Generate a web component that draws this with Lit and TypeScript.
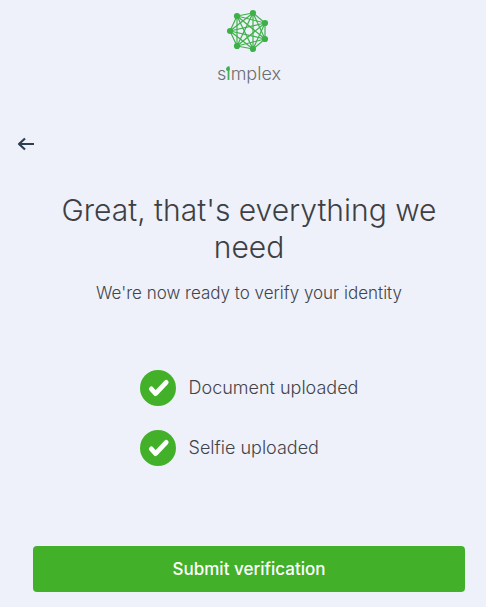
import { LitElement, html, svg, css } from "lit";
import { customElement, property } from "lit/decorators.js";

const NODES: [number, number][] = [
  [10, 8], [26, 5], [38, 15], [38, 31], [26, 41], [10, 38], [3, 23],
];

@customElement("brand-logo")
class BrandLogo extends LitElement {
  static styles = css`
    :host { display: flex; flex-direction: column; align-items: center; }
    .mark { display: block; width: 44px; height: 46px; }
    .name {
      margin-top: 8px;
      font: 300 18px/24px Inter, "Open Sans", sans-serif;
      color: #6c6d71;
    }
    .accent { position: relative; color: #3eb049; font-weight: 400; }
    .accent::before {
      content: "";
      position: absolute;
      left: 0;
      top: 4px;
      width: 4px;
      height: 4px;
      border-radius: 50%;
      background: #3eb049;
    }
  `;

  render() {
    const lines = NODES.flatMap((a, i) =>
      NODES.slice(i + 1).map(
        (b) => svg`<line x1=${a[0]} y1=${a[1]} x2=${b[0]} y2=${b[1]}></line>`
      )
    );
    return html`
      <svg class="mark" viewBox="0 0 44 46" aria-hidden="true">
        <g stroke="#3eb049" stroke-width="1.2">${lines}</g>
        <g fill="#3eb049">
          ${NODES.map((n) => svg`<circle cx=${n[0]} cy=${n[1]} r="3.1"></circle>`)}
        </g>
      </svg>
      <div class="name">s<span class="accent">i</span>mplex</div>
    `;
  }
}

@customElement("status-item")
class StatusItem extends LitElement {
  @property() label = "";

  static styles = css`
    :host { display: flex; align-items: center; gap: 13px; }
    .badge { flex: none; width: 36px; height: 36px; }
    .label { padding-bottom: 1px; font-size: 18px; }
  `;

  render() {
    return html`
      <svg class="badge" viewBox="0 0 36 36" aria-hidden="true">
        <circle cx="18" cy="18" r="18" fill="#43b02a"></circle>
        <path d="M11.3 18.9 L15.6 23.6 L26.2 12.3" fill="none" stroke="#fff"
          stroke-width="4.8" stroke-linecap="round" stroke-linejoin="round"></path>
      </svg>
      <span class="label">${this.label}</span>
    `;
  }
}

@customElement("app-root")
class AppRoot extends LitElement {
  static styles = css`
    :host {
      display: block;
      box-sizing: border-box;
      min-height: 100vh;
      padding: 8px 21px 15px 33px;
      background: #eef1f9;
      color: #43444a;
      font: 300 17px/24px Inter, "Open Sans", sans-serif;
    }
    .back {
      display: block;
      margin: 46px 0 0 -20px;
      padding: 4px;
      border: 0;
      background: none;
      color: #2c3e50;
      cursor: pointer;
    }
    .back svg { display: block; }
    h1 {
      margin: 36px 0 0;
      font-size: 30px;
      line-height: 37px;
      font-weight: 300;
      text-align: center;
      color: #3e3f44;
    }
    .lead { margin: 15px 0 0; text-align: center; }
    ul {
      display: flex;
      flex-direction: column;
      gap: 24px;
      width: fit-content;
      margin: 65px auto 0;
      padding: 0;
      list-style: none;
    }
    .submit {
      display: block;
      width: 100%;
      margin-top: 80px;
      padding: 11px 16px;
      border: 0;
      border-radius: 4px;
      background: #43b02a;
      color: #fff;
      font: 500 17px/24px Inter, "Open Sans", sans-serif;
      cursor: pointer;
    }
  `;

  render() {
    return html`
      <brand-logo></brand-logo>
      <button class="back" type="button" aria-label="Back">
        <svg width="18" height="16" viewBox="0 0 18 16" fill="none" stroke="currentColor"
          stroke-width="2.2" stroke-linejoin="round">
          <path d="M17 8 H2 M8 2.5 L2 8 L8 13.5"></path>
        </svg>
      </button>
      <h1>Great, that's everything we need</h1>
      <p class="lead">We're now ready to verify your identity</p>
      <ul>
        <li><status-item label="Document uploaded"></status-item></li>
        <li><status-item label="Selfie uploaded"></status-item></li>
      </ul>
      <button class="submit" type="button">Submit verification</button>
    `;
  }
}
